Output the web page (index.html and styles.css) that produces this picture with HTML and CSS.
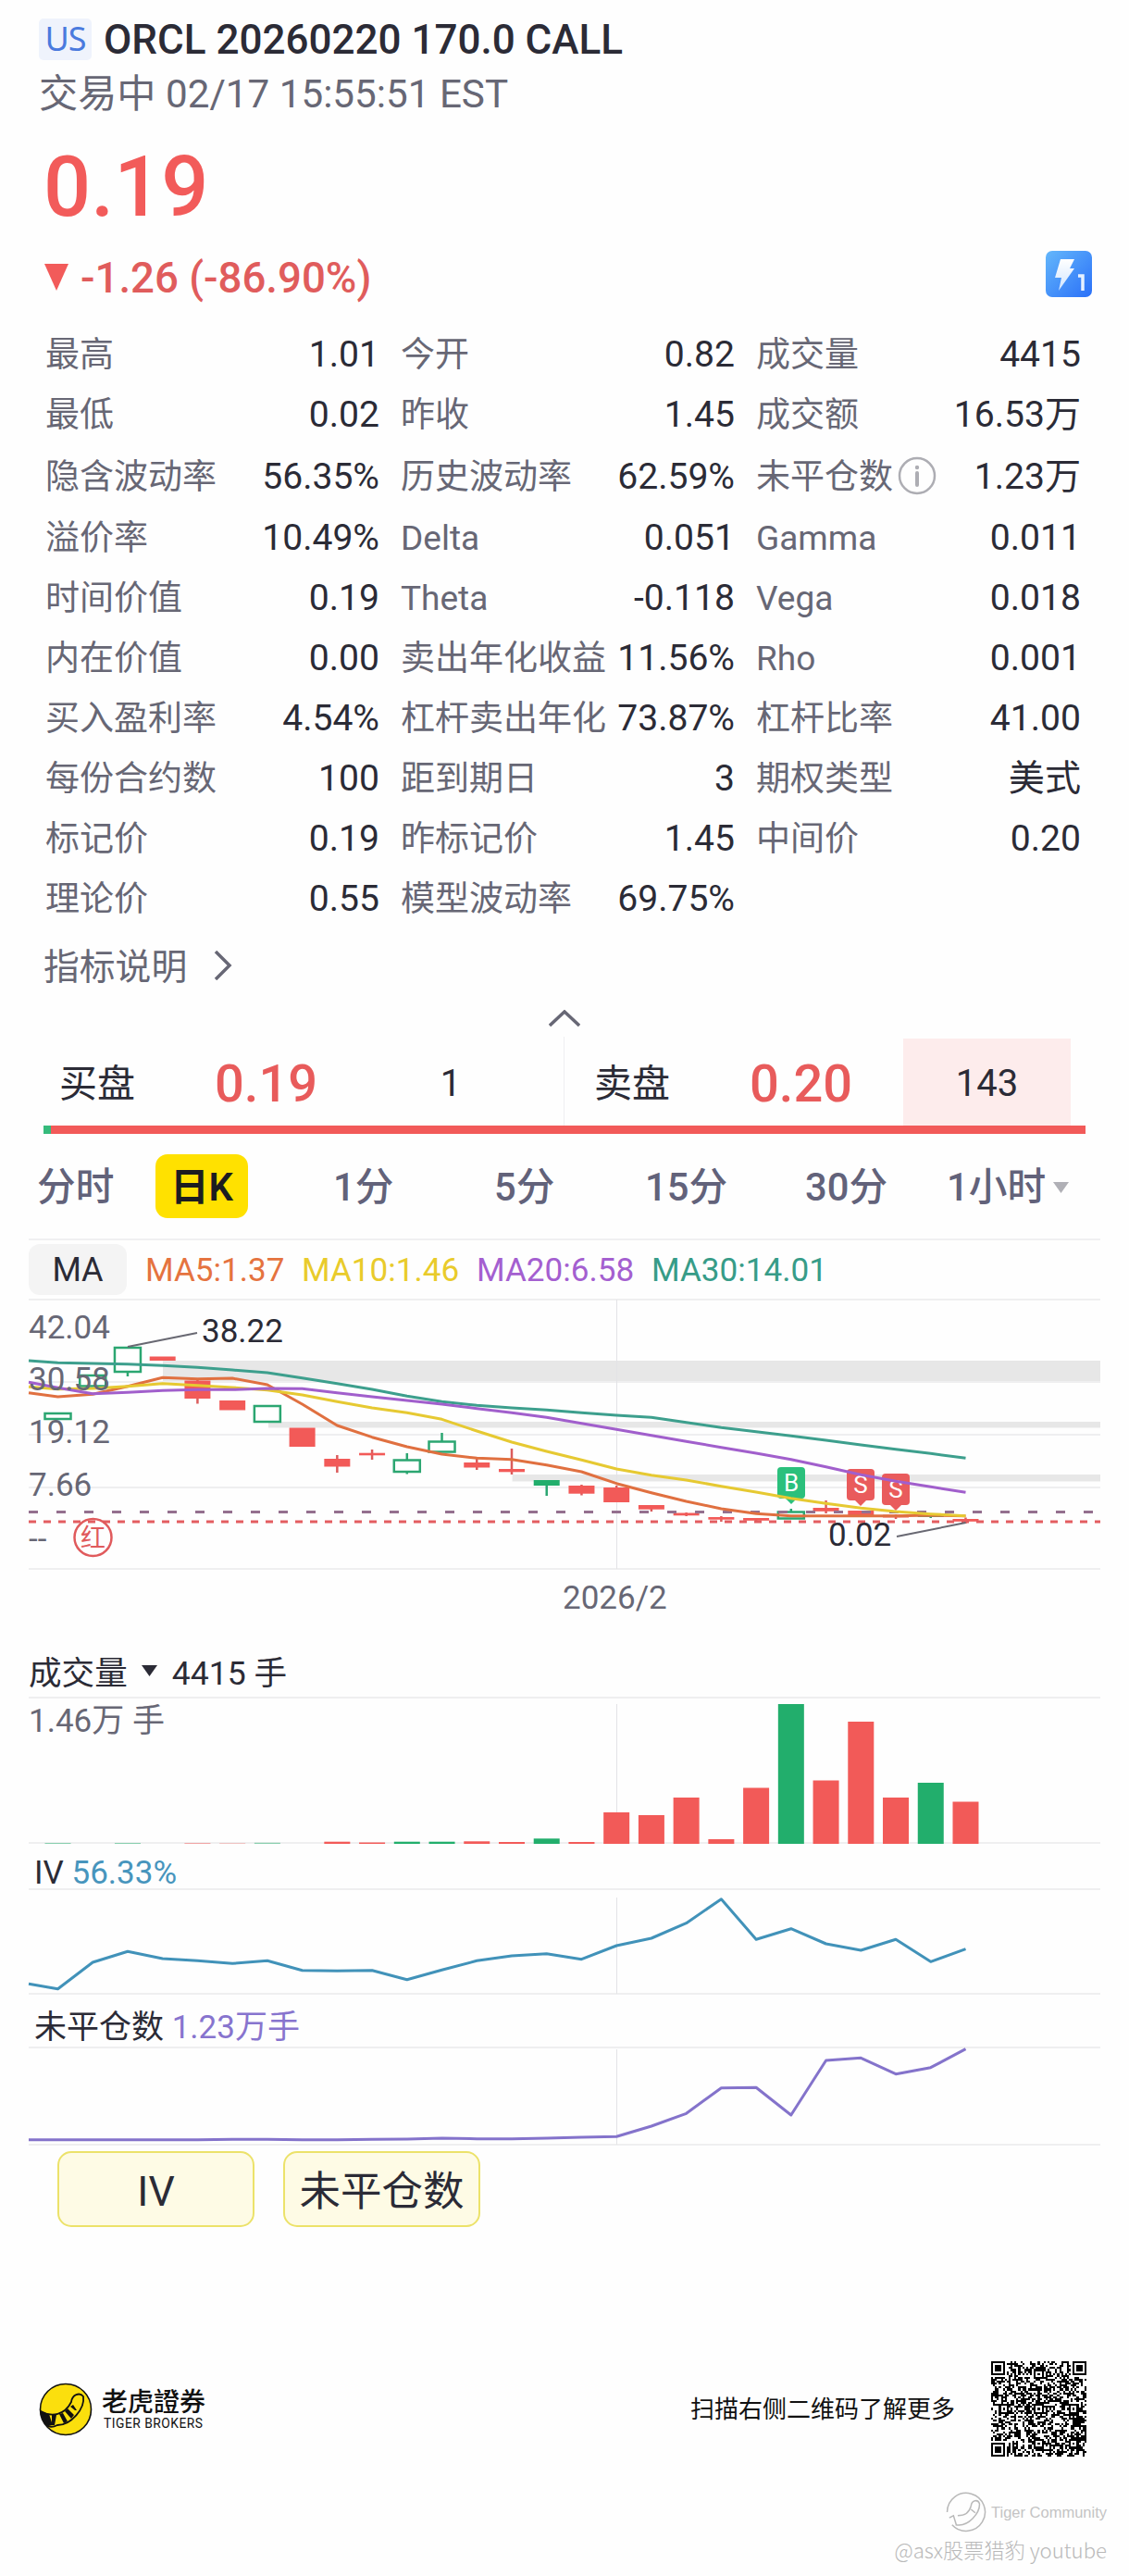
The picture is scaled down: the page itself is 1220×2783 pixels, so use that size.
FILE: index.html
```html
<!DOCTYPE html>
<html lang="zh-CN">
<head>
	<meta charset="utf-8">
	<title>ORCL 20260220 170.0 CALL</title>
	<link rel="stylesheet" href="styles.css">
</head>
<body>
	<div class="header">
		<div class="title"><span class="market">US</span><h1>ORCL 20260220 170.0 CALL</h1></div>
		<p class="status">交易中 02/17 15:55:51 EST</p>
		<p class="price">0.19</p>
		<div class="change">
			<svg class="down" width="26" height="29" viewBox="0 0 26 29"><path d="M0 0H26L13 29Z" fill="#f25b5a"/></svg>
			<span>-1.26 (-86.90%)</span>
			<svg class="level" width="50" height="50" viewBox="0 0 50 50">
				<defs>
					<linearGradient id="lv" x1="0" y1="0" x2="1" y2="1"><stop offset="0" stop-color="#64b7fb"/><stop offset="1" stop-color="#2a70f8"/></linearGradient>
					<linearGradient id="bolt" x1="0" y1="0" x2="0" y2="1"><stop offset="0" stop-color="#fff"/><stop offset="1" stop-color="#cfe5ff"/></linearGradient>
				</defs>
				<rect width="50" height="50" rx="7" fill="url(#lv)"/>
				<path d="M16 9H31L26 19H31L14 43L17 29H10Z" fill="url(#bolt)"/>
				<path d="M35 27H40V43" fill="none" stroke="#e6f1ff" stroke-width="3.500"/>
			</svg>
		</div>
	</div>

	<div class="quote">
		<div><label>最高</label><b>1.01</b></div>
		<div><label>今开</label><b>0.82</b></div>
		<div><label>成交量</label><b>4415</b></div>
		<div><label>最低</label><b>0.02</b></div>
		<div><label>昨收</label><b>1.45</b></div>
		<div><label>成交额</label><b>16.53万</b></div>
		<div><label>隐含波动率</label><b>56.35%</b></div>
		<div><label>历史波动率</label><b>62.59%</b></div>
		<div>
			<label>未平仓数</label>
			<svg class="info" width="42" height="42" viewBox="0 0 42 42"><circle cx="21" cy="21" r="19" fill="none" stroke="#adadb3" stroke-width="2.500"/><circle cx="21" cy="12" r="2.200" fill="#adadb3"/><path d="M21 18V31" stroke="#adadb3" stroke-width="4" stroke-linecap="round"/></svg>
			<b>1.23万</b>
		</div>
		<div><label>溢价率</label><b>10.49%</b></div>
		<div><label>Delta</label><b>0.051</b></div>
		<div><label>Gamma</label><b>0.011</b></div>
		<div><label>时间价值</label><b>0.19</b></div>
		<div><label>Theta</label><b>-0.118</b></div>
		<div><label>Vega</label><b>0.018</b></div>
		<div><label>内在价值</label><b>0.00</b></div>
		<div><label>卖出年化收益</label><b>11.56%</b></div>
		<div><label>Rho</label><b>0.001</b></div>
		<div><label>买入盈利率</label><b>4.54%</b></div>
		<div><label>杠杆卖出年化</label><b>73.87%</b></div>
		<div><label>杠杆比率</label><b>41.00</b></div>
		<div><label>每份合约数</label><b>100</b></div>
		<div><label>距到期日</label><b>3</b></div>
		<div><label>期权类型</label><b>美式</b></div>
		<div><label>标记价</label><b>0.19</b></div>
		<div><label>昨标记价</label><b>1.45</b></div>
		<div><label>中间价</label><b>0.20</b></div>
		<div><label>理论价</label><b>0.55</b></div>
		<div><label>模型波动率</label><b>69.75%</b></div>
	</div>

	<div class="explain"><span>指标说明</span><svg width="20" height="32" viewBox="0 0 20 32"><path d="M2 1L17 16L2 31" fill="none" stroke="#676775" stroke-width="3.500"/></svg></div>
	<div class="fold"><svg width="34" height="19" viewBox="0 0 34 19"><path d="M1 17L17 2L33 17" fill="none" stroke="#676775" stroke-width="3.500"/></svg></div>

	<div class="depth">
		<div class="side bid"><span class="name">买盘</span><strong>0.19</strong><span class="size">1</span></div>
		<div class="side ask"><span class="name">卖盘</span><strong>0.20</strong><span class="size hot">143</span></div>
	</div>
	<div class="ratio"><i></i></div>

	<div class="tabs">
		<span class="t1">分时</span>
		<span class="active">日K</span>
		<span class="t2">1分</span>
		<span class="t3">5分</span>
		<span class="t4">15分</span>
		<span class="t5">30分</span>
		<span class="t6">1小时<svg width="17" height="12" viewBox="0 0 17 12"><path d="M0 0H17L8.500 12Z" fill="#b0b0b6"/></svg></span>
	</div>

	<div class="legend">
		<span class="chip">MA</span>
		<span class="ma5">MA5:1.37</span>
		<span class="ma10">MA10:1.46</span>
		<span class="ma20">MA20:6.58</span>
		<span class="ma30">MA30:14.01</span>
	</div>
	<svg class="chart" id="kline" width="1220" height="387" viewBox="0 1403 1220 387"></svg>

	<div class="sub volume">成交量<svg width="17" height="12" viewBox="0 0 17 12"><path d="M0 0H17L8.500 12Z" fill="#2b2b36"/></svg>4415 手</div>
	<svg class="chart" id="volume" width="1220" height="172" viewBox="0 1833 1220 172"></svg>

	<div class="sub iv">IV <em>56.33%</em></div>
	<svg class="chart" id="iv" width="1220" height="125" viewBox="0 2040 1220 125"></svg>

	<div class="sub oi">未平仓数 <em>1.23万手</em></div>
	<svg class="chart" id="oi" width="1220" height="113" viewBox="0 2211 1220 113"></svg>

	<div class="buttons"><span>IV</span><span>未平仓数</span></div>

	<div class="footer">
		<svg width="58" height="58" viewBox="0 0 58 58">
			<circle cx="29" cy="29" r="27.500" fill="#fbdf0d" stroke="#111" stroke-width="1.600"/>
			<path d="M2 31C14 38 28 35 35 21C36 13 44 10 48 15C50 28 35 46 20 46C16 48 12 48 10 47C5 42 3 38 2 31Z" fill="#fbdf0d" stroke="#111" stroke-width="1.800"/>
			<path d="M2 31L11 34L15 46L10 47C4 42 3 37 2 31ZM14 35H19L17 46H14ZM22 34L26 33L31 42L27 44ZM28 31L31 28L38 35L35 39ZM34 26L37 24L41 30L39 30Z" fill="#111"/>
		</svg>
		<div class="brand"><p>老虎證券</p><small>TIGER BROKERS</small></div>
		<span class="scan">扫描右侧二维码了解更多</span>
		<svg id="qr" width="103" height="103" viewBox="0 0 49 49" shape-rendering="crispEdges"></svg>
	</div>

	<div class="mark">
		<div class="community">
			<svg width="44" height="44" viewBox="0 0 58 58" fill="none" stroke="#b9b9b9" stroke-width="2"><path d="M2 29A27 27 0 1 1 9 47M5 37L11 34L15 47M14 47C33 51 49 29 48 17C46 10 37 12 36 20C34 29 27 34 17 34M36 25L42 30"/></svg>
			<span>Tiger Community</span>
		</div>
		<p>@asx股票猎豹 youtube</p>
	</div>
	<script src="script.js"></script>
</body>
</html>
```
FILE: styles.css
```css
*{
	margin: 0;
	padding: 0;
	box-sizing: border-box;
}
body{
	width: 1220px;
	background: #fefefe;
	color: #2b2b36;
	font-family: Roboto, "Noto Sans CJK SC", sans-serif;
	line-height: 1.2;
}
svg{
	display: block;
	flex: none;
}
em, b{
	font-style: normal;
	font-weight: 400;
}

/* header */
.header{
	padding: 12px 40px 0 42px;
	height: 350px;
}
.title{
	display: flex;
	align-items: center;
	height: 60px;
}
.market{
	width: 57px;
	height: 45px;
	margin-right: 13px;
	border-radius: 5px;
	background: #eff3fc;
	color: #4a7ade;
	font: 36px/43px "Noto Sans", sans-serif;
	letter-spacing: -1px;
	text-align: center;
}
h1{
	margin-top: 2px;
	font-size: 44px;
	font-weight: 500;
	white-space: nowrap;
}
.status{
	color: #676775;
	font-size: 42.2px;
	line-height: 60px;
}
.price{
	padding: 2px 0 0 5px;
	color: #f25b5a;
	font-size: 90px;
	font-weight: 500;
	line-height: 137px;
}
.change{
	display: flex;
	color: #e05c5c;
	font-size: 45.6px;
	font-weight: 500;
	line-height: 59px;
}
.down{
	margin: 14px 13px 0 6px;
}
.level{
	margin-left: auto;
}

/* quote table */
.quote{
	display: grid;
	grid-template-columns: 361px 361px 351px;
	grid-template-rows: 65px 65px 68px repeat(7, 65px);
	column-gap: 23px;
	padding-left: 49px;
}
.quote div{
	display: flex;
	align-items: center;
	line-height: 44px;
	white-space: nowrap;
}
.quote label{
	padding-top: 3px;
	color: #676775;
	font-size: 37px;
}
.quote b{
	margin-left: auto;
	padding-top: 1px;
	font-size: 39.1px;
}
.info{
	margin-left: 5px;
}
.explain{
	display: flex;
	align-items: center;
	height: 80px;
	padding-left: 47px;
	color: #676775;
	font-size: 38.8px;
}
.explain span{
	padding-top: 4px;
}
.explain svg{
	margin-left: 29px;
}
.fold{
	display: flex;
	justify-content: center;
	height: 37px;
	padding-top: 8px;
}

/* bid / ask */
.depth{
	display: flex;
	height: 96px;
	padding-left: 47px;
}
.side{
	display: flex;
	width: 562px;
	line-height: 102px;
}
.ask{
	width: 548px;
	border-left: 1px solid #efeff1;
}
.name{
	width: 185px;
	padding-left: 17px;
	font-size: 41px;
}
.ask .name{
	padding-left: 32px;
	width: 200px;
}
.side strong{
	width: 166px;
	color: #e85b5b;
	font-size: 56px;
	font-weight: 500;
}
.size{
	width: 181px;
	font-size: 40px;
	text-align: center;
}
.bid .size{
	width: 178px;
}
.hot{
	margin-top: 2px;
	background: #fdecec;
	line-height: 98px;
}
.ratio{
	height: 9px;
	margin: 0 47px;
	background: #f25a59;
}
.ratio i{
	display: block;
	width: 8px;
	height: 9px;
	background: #36bb7c;
}

/* period tabs */
.tabs{
	display: flex;
	align-items: center;
	height: 113px;
	padding-left: 40px;
	color: #62627a;
	font-size: 41.7px;
	font-weight: 500;
	line-height: 54px;
	white-space: nowrap;
}
.tabs span{
	padding-top: 3px;
}
.tabs .active{
	width: 100px;
	height: 69px;
	padding-top: 0;
	border-radius: 13px;
	background: #ffe100;
	color: #1c1c20;
	font-weight: 600;
	line-height: 72px;
	text-align: center;
}
.t1{ width: 128px; }
.t2{ margin-left: 92px; width: 174px; }
.t3{ width: 163px; }
.t4{ width: 173px; }
.t5{ width: 153px; }
.t6{
	display: flex;
	align-items: center;
	gap: 8px;
}

/* charts */
.legend{
	display: flex;
	align-items: center;
	height: 65px;
	margin: 0 31px;
	border-top: 2px solid #f0f0f2;
	font-size: 35.1px;
	line-height: 44px;
	white-space: nowrap;
}
.legend span{
	padding-top: 1px;
}
.chip{
	width: 106px;
	height: 55px;
	margin-right: 20px;
	border-radius: 12px;
	background: #f4f4f4;
	font-size: 36px;
	line-height: 55px;
	text-align: center;
}
.ma5{ color: #e5733f; width: 169px; }
.ma10{ color: #e9cb2b; width: 189px; }
.ma20{ color: #a45fd0; width: 189px; }
.ma30{ color: #379c88; }
.chart{
	font-size: 35px;
	fill: none;
}
.grid{ stroke: #efeff0; stroke-width: 2; }
.month{ stroke: #e3e3e6; stroke-width: 1; }
.band{ fill: #e7e7e7; }
.axis{ fill: #676775; }
.tip{ fill: #2b2b36; }
.leader{ stroke: #686872; stroke-width: 2; }
.line{ stroke-width: 3; stroke-linejoin: round; }
.up{ fill: #22ae6c; }
.dn{ fill: #f25a58; }
.hollow{ fill: #fff; stroke: #2ba671; stroke-width: 2.5; }
.faint{ opacity: .5; }
.wickup{ stroke: #2ba671; stroke-width: 2.5; }
.wickdn{ stroke: #db5b5b; stroke-width: 2.5; }
.cost{ stroke: #94708f; stroke-width: 3; stroke-dasharray: 10 20; }
.last{ stroke: #e35d60; stroke-width: 3; stroke-dasharray: 8 8; }
.trade{ fill: #fff; font-size: 26px; text-anchor: middle; }
.ring{ stroke: #e05a5c; stroke-width: 2.5; }
.bonus{ fill: #e05a5c; font-size: 27px; text-anchor: middle; }

.sub{
	padding-left: 37px;
	font-size: 35px;
	white-space: pre;
}
.volume{
	display: flex;
	align-items: center;
	height: 43px;
	padding: 0 0 7px 31px;
	font-size: 35.6px;
	line-height: 34px;
}
.volume svg{
	margin: -6px 16px 0 15px;
}
.iv{ line-height: 37px; height: 35px; }
.iv em{ color: #4795bd; }
.oi{
	height: 46px;
	line-height: 52px;
}
.oi em{ color: #8774ce; }

.buttons{
	display: flex;
	gap: 31px;
	height: 82px;
	padding-left: 62px;
}
.buttons span{
	width: 213px;
	border: 2px solid #ece26a;
	border-radius: 15px;
	background: #fefbe5;
	font-size: 44.5px;
	line-height: 84px;
	text-align: center;
}

/* footer */
.footer{
	display: flex;
	align-items: center;
	height: 103px;
	margin-top: 145px;
	padding-left: 42px;
	color: #111;
}
.brand{
	width: 111px;
	margin-left: 10px;
	white-space: nowrap;
}
.brand p{
	font: 500 28px/32px "Noto Sans CJK TC", sans-serif;
}
.brand small{
	display: block;
	margin-left: 2px;
	font-size: 13.8px;
	line-height: 19px;
	letter-spacing: .5px;
}
.scan{
	margin-left: 525px;
	width: 325px;
	font-size: 26px;
	line-height: 32px;
	white-space: nowrap;
}
.mark{
	display: flex;
	flex-direction: column;
	align-items: flex-end;
	margin-top: 38px;
	padding-right: 24px;
	color: #c4c4c4;
}
.community{
	display: flex;
	align-items: center;
	gap: 5px;
	font: 16.5px/44px "Liberation Sans", sans-serif;
}
.mark p{
	font: 300 22.2px/36px "Noto Sans CJK SC", sans-serif;
	color: #b9b9b9;
}
```
FILE: script.js
```js
var NS = 'http://www.w3.org/2000/svg';
var GREEN = 'up', RED = 'dn';

function add(id, tag, attrs, text) {
	var el = document.createElementNS(NS, tag);
	for (var k in attrs) el.setAttribute(k, attrs[k]);
	if (text) el.textContent = text;
	document.getElementById(id).appendChild(el);
}
function cx(i) { return 62.5 + 37.73 * i; }
function seg(id, cls, x1, y1, x2, y2) {
	add(id, 'line', {'class': cls, x1: x1, y1: y1, x2: x2, y2: y2});
}
function box(id, cls, x, y, w, h) {
	add(id, 'rect', {'class': cls, x: x, y: y, width: w, height: h});
}
// first value sits on the left edge of the plot
function series(id, color, base, vals) {
	var pts = vals.map(function (v, i) {
		return (i ? cx(i - 1) : 31).toFixed(1) + ',' + (base + v / 3).toFixed(1);
	});
	add(id, 'polyline', {'class': 'line', stroke: color, points: pts.join(' ')});
}

// k line
[[176, 1470, 24], [290, 1536, 6.5], [553.6, 1593, 7.5]].forEach(function (b) {
	box('kline', 'band', b[0], b[1], 1189 - b[0], b[2]);
});
[1404, 1493, 1550, 1607, 1695].forEach(function (y) { seg('kline', 'grid', 31, y, 1189, y); });
seg('kline', 'month', 666.5, 1404, 666.5, 1695);

// type, body top, body bottom, high, low
var candles = [
	['h', 1527, 1533], ['h', 1486, 1497.5], ['h', 1456, 1482, 1456, 1487], ['r', 1465.5, 1470],
	['r', 1491.5, 1511, 1491, 1516.5], ['r', 1513, 1523.5], ['h', 1519, 1536], ['r', 1542.5, 1563],
	['r', 1576, 1584.5, 1572, 1591], ['r', 1569.7, 1572.3, 1566, 1577], ['h', 1577.5, 1590, 1570, 1592.5], ['h', 1557.5, 1568.5, 1548, 1569],
	['r', 1580, 1585.5, 1574, 1588], ['r', 1587, 1590.3, 1565, 1593], ['g', 1599, 1605, 1599, 1616], ['r', 1605, 1613.7, 1604, 1615.5],
	['r', 1607, 1623, 1605, 1623], ['r', 1626, 1630.7, 1626, 1633], ['r', 1634.5, 1637.3, 1634, 1638], ['r', 1639, 1641.7, 1638, 1644],
	['r', 1640, 1642.8, 1640, 1644], ['h', 1633.5, 1640.5, 1630, 1641], ['r', 1629, 1632.8, 1621, 1635], ['r', 1632, 1637],
	['r', 1636.5, 1639.5, 1636, 1641], ['g', 1637.5, 1639, 1636, 1640], ['r', 1641, 1643.8, 1639.5, 1646]
];
candles.forEach(function (c, i) {
	var x = cx(i), wick = c[0] == 'r' ? 'wickdn' : 'wickup';
	if (c[3]) seg('kline', wick, x, c[3], x, c[4]);
	box('kline', {h: 'hollow', g: GREEN, r: RED}[c[0]], x - 14, c[1], 28, c[2] - c[1]);
});

// trade markers
[[855, 1585, 'B', '#2bc07c'], [930, 1587, 'S', '#e95b5c'], [968, 1592, 'S', '#e95b5c']].forEach(function (m) {
	var y = m[1];
	add('kline', 'rect', {x: m[0] - 15, y: y, width: 30, height: 34, rx: 4, fill: m[3]});
	add('kline', 'path', {d: 'M' + (m[0] - 7) + ' ' + (y + 33) + 'h14l-7 7z', fill: m[3]});
	add('kline', 'text', {'class': 'trade', x: m[0], y: y + 26}, m[2]);
});
seg('kline', 'cost', 31, 1633.5, 1189, 1633.5);
seg('kline', 'last', 31, 1644, 1189, 1644);

series('kline', '#3d9f8d', 1400, [210, 217, 219, 221, 226, 232, 240, 249, 266, 284, 303, 325, 343, 355, 363, 370, 379, 387, 394, 410, 427, 440, 454, 468, 483, 497, 511, 526]);
series('kline', '#e07040', 1400, [314, 327, 319, 293, 265, 269, 267, 288, 351, 420, 458, 489, 513, 526, 530, 548, 570, 608, 638, 666, 690, 706, 713, 713, 713, 713, 711, 713]);
series('kline', '#e6c932', 1400, [295, 302, 300, 293, 284, 290, 297, 305, 321, 343, 363, 379, 400, 438, 474, 504, 532, 561, 581, 597, 617, 636, 656, 673, 688, 699, 707, 713]);
series('kline', '#a15fcc', 1400, [280, 298, 317, 313, 307, 304, 304, 300, 301, 314, 327, 339, 351, 365, 379, 394, 413, 433, 452, 472, 491, 510, 530, 554, 580, 601, 619, 637]);

[['42.04', 1445.5], ['30.58', 1502], ['19.12', 1559], ['7.66', 1616], ['--', 1674]].forEach(function (t) {
	add('kline', 'text', {'class': 'axis', x: 31, y: t[1]}, t[0]);
});
add('kline', 'text', {'class': 'axis', x: 608, y: 1738}, '2026/2');
seg('kline', 'leader', 138, 1455, 213, 1440);
seg('kline', 'leader', 969, 1660, 1043.6, 1645);
add('kline', 'text', {'class': 'tip', x: 218, y: 1450}, '38.22');
add('kline', 'text', {'class': 'tip', x: 895, y: 1669.5}, '0.02');
add('kline', 'circle', {'class': 'ring', cx: 100.5, cy: 1661, r: 20});
add('kline', 'text', {'class': 'bonus', x: 100.5, y: 1671}, '红');

// volume
seg('volume', 'grid', 31, 1834, 1189, 1834);
seg('volume', 'grid', 31, 1991, 1189, 1991);
seg('volume', 'month', 666.5, 1841, 666.5, 1991);
[
	['up faint', 1991], ['', 0], ['up faint', 1991], ['', 0], ['dn faint', 1991], ['dn faint', 1991.4], ['up faint', 1990.8], ['', 0],
	[RED, 1989.7], [RED, 1990.5], [GREEN, 1989.7], [GREEN, 1989.7], [RED, 1989.3], [RED, 1990], [GREEN, 1986.3], [RED, 1990],
	[RED, 1958], [RED, 1961], [RED, 1942], [RED, 1987], [RED, 1931.5], [GREEN, 1841], [RED, 1923.5], [RED, 1860],
	[RED, 1942], [GREEN, 1926], [RED, 1946.5]
].forEach(function (v, i) {
	if (v[0]) box('volume', v[0], cx(i) - 14, v[1], 28, 1992 - v[1]);
});
add('volume', 'text', {'class': 'axis', x: 31, y: 1870.5}, '1.46万 手');

// implied volatility
seg('iv', 'grid', 31, 2041, 1189, 2041);
seg('iv', 'grid', 31, 2154, 1189, 2154);
seg('iv', 'month', 666.5, 2050, 666.5, 2154);
series('iv', '#4192b9', 2090, [160, 176, 90, 55, 78, 85, 94, 85, 116, 118, 116, 146, 115, 85, 69, 62, 80, 36, 12, -37, -115, 16, -19, 30, 51, 16, 88, 47]);

// open interest
seg('oi', 'grid', 31, 2212, 1189, 2212);
seg('oi', 'grid', 31, 2317, 1189, 2317);
seg('oi', 'month', 666.5, 2214, 666.5, 2317);
series('oi', '#8473cb', 2090, [665, 665, 665, 665, 665, 665, 664, 664, 665, 665, 664, 663, 660, 662, 662, 660, 657, 655, 621, 580, 497, 496, 585, 408, 400, 452, 431, 371]);

// qr code, 49 x 49 modules
(function () {
	var n = 49, d = '', seed = 20260220, fixed = {};
	function rand() {
		seed = (seed * 1103515245 + 12345) % 2147483648;
		return seed / 2147483648;
	}
	function square(x, y, r, pad) {
		for (var i = -r - pad; i <= r + pad; i++) {
			for (var j = -r - pad; j <= r + pad; j++) {
				var m = Math.max(Math.abs(i), Math.abs(j));
				fixed[(x + i) + ',' + (y + j)] = m == r || m <= r - 2;
			}
		}
	}
	[[6, 24], [24, 6], [24, 24], [24, 42], [42, 24], [42, 42]].forEach(function (p) { square(p[0], p[1], 2, 0); });
	[[3, 3], [45, 3], [3, 45]].forEach(function (p) { square(p[0], p[1], 3, 1); });
	for (var y = 0; y < n; y++) {
		for (var x = 0; x < n; x++) {
			var f = fixed[x + ',' + y], on = rand() > .48;
			if (x == 6 || y == 6) on = (x + y) % 2 == 0;
			if (f !== undefined) on = f;
			if (on) d += 'M' + x + ' ' + y + 'h1v1h-1z';
		}
	}
	add('qr', 'path', {d: d, fill: '#000'});
})();
```
